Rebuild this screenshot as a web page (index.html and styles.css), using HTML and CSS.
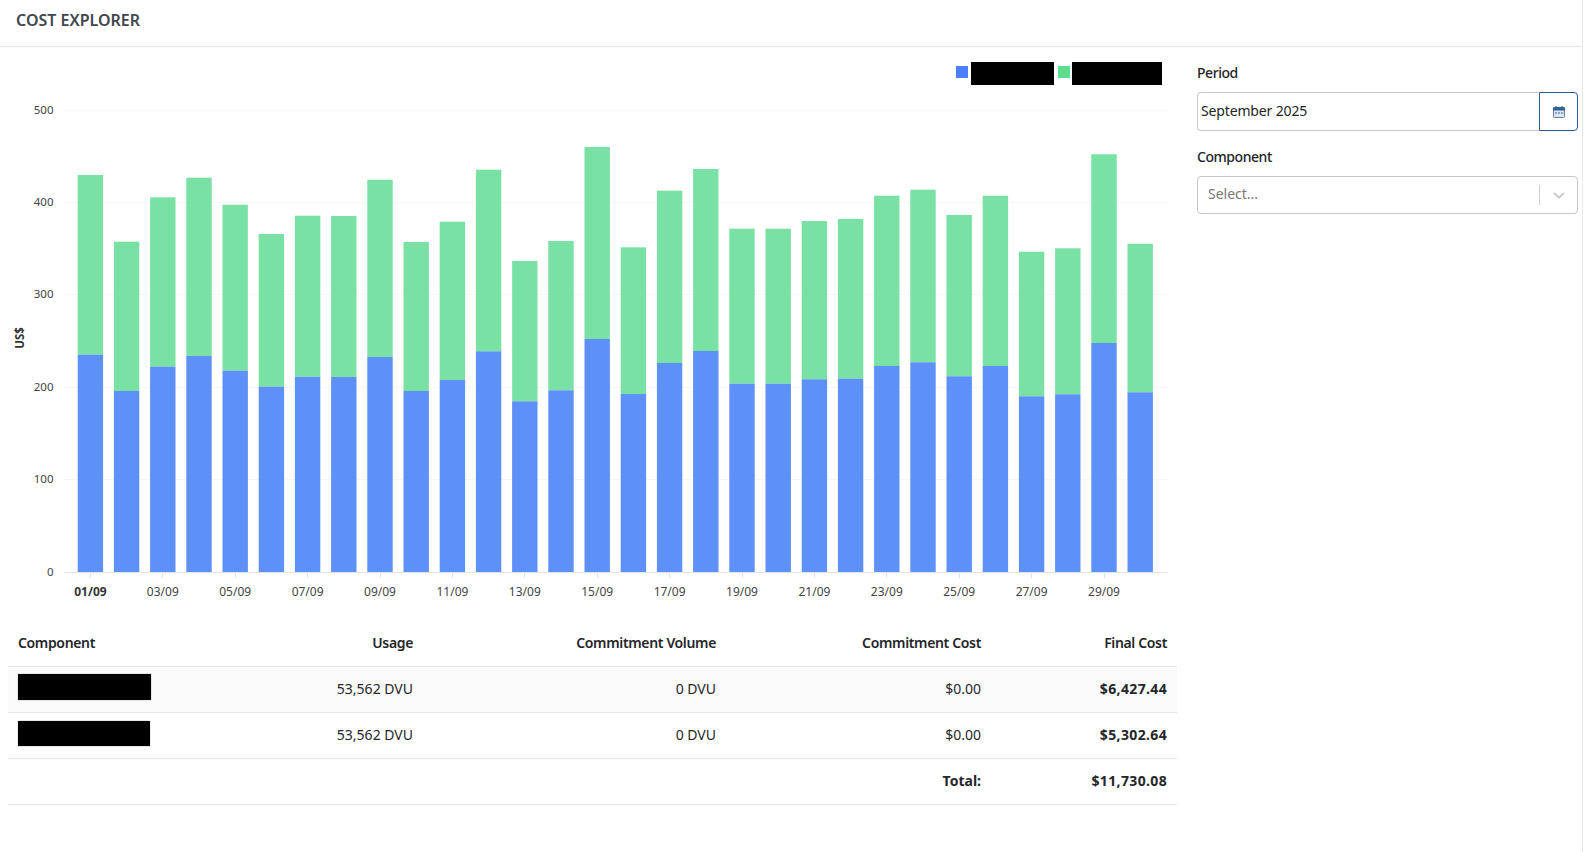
FILE: index.html
```html
<!DOCTYPE html>
<html lang="en">
<head>
<meta charset="utf-8">
<title>Cost Explorer</title>
<link rel="stylesheet" href="styles.css">
</head>
<body>
<div class="page">
  <header class="topbar"><h1 class="title">COST EXPLORER</h1></header>
  <div class="layout">
    <main class="main">
      <svg class="chart" width="1169" height="573" viewBox="8 47 1169 573" role="img" aria-label="Daily cost chart">
        <g class="grid">
          <line x1="64" x2="1167" y1="110.5" y2="110.5"/>
          <line x1="64" x2="1167" y1="202.5" y2="202.5"/>
          <line x1="64" x2="1167" y1="294.5" y2="294.5"/>
          <line x1="64" x2="1167" y1="387.5" y2="387.5"/>
          <line x1="64" x2="1167" y1="479.5" y2="479.5"/>
        </g>
        <g class="series-green">
          <rect x="77.7" y="175" width="25.4" height="179.7"/>
          <rect x="113.9" y="241.7" width="25.4" height="149.3"/>
          <rect x="150.1" y="197.3" width="25.4" height="169.4"/>
          <rect x="186.3" y="177.7" width="25.4" height="178.3"/>
          <rect x="222.5" y="204.7" width="25.4" height="166"/>
          <rect x="258.7" y="234" width="25.4" height="152.7"/>
          <rect x="294.9" y="215.7" width="25.4" height="161"/>
          <rect x="331.1" y="216" width="25.4" height="161"/>
          <rect x="367.3" y="179.7" width="25.4" height="177.3"/>
          <rect x="403.5" y="242" width="25.4" height="149"/>
          <rect x="439.7" y="221.7" width="25.4" height="158.3"/>
          <rect x="475.9" y="169.7" width="25.4" height="181.6"/>
          <rect x="512.1" y="261" width="25.4" height="140.3"/>
          <rect x="548.3" y="241" width="25.4" height="149.3"/>
          <rect x="584.5" y="147" width="25.4" height="192"/>
          <rect x="620.7" y="247.3" width="25.4" height="146.7"/>
          <rect x="656.9" y="190.7" width="25.4" height="172.3"/>
          <rect x="693.1" y="169" width="25.4" height="182"/>
          <rect x="729.3" y="228.7" width="25.4" height="155"/>
          <rect x="765.5" y="228.7" width="25.4" height="155"/>
          <rect x="801.7" y="221" width="25.4" height="158.3"/>
          <rect x="837.9" y="219" width="25.4" height="159.7"/>
          <rect x="874.1" y="195.7" width="25.4" height="170.3"/>
          <rect x="910.3" y="189.7" width="25.4" height="172.6"/>
          <rect x="946.5" y="215" width="25.4" height="161.3"/>
          <rect x="982.7" y="195.7" width="25.4" height="170.3"/>
          <rect x="1018.9" y="251.7" width="25.4" height="144.6"/>
          <rect x="1055.1" y="248.3" width="25.4" height="146"/>
          <rect x="1091.3" y="154.3" width="25.4" height="188.7"/>
          <rect x="1127.5" y="243.7" width="25.4" height="148.6"/>
        </g>
        <g class="series-blue">
          <rect x="77.7" y="354.7" width="25.4" height="217.3"/>
          <rect x="113.9" y="391" width="25.4" height="181"/>
          <rect x="150.1" y="366.7" width="25.4" height="205.3"/>
          <rect x="186.3" y="356" width="25.4" height="216"/>
          <rect x="222.5" y="370.7" width="25.4" height="201.3"/>
          <rect x="258.7" y="386.7" width="25.4" height="185.3"/>
          <rect x="294.9" y="376.7" width="25.4" height="195.3"/>
          <rect x="331.1" y="377" width="25.4" height="195"/>
          <rect x="367.3" y="357" width="25.4" height="215"/>
          <rect x="403.5" y="391" width="25.4" height="181"/>
          <rect x="439.7" y="380" width="25.4" height="192"/>
          <rect x="475.9" y="351.3" width="25.4" height="220.7"/>
          <rect x="512.1" y="401.3" width="25.4" height="170.7"/>
          <rect x="548.3" y="390.3" width="25.4" height="181.7"/>
          <rect x="584.5" y="339" width="25.4" height="233"/>
          <rect x="620.7" y="394" width="25.4" height="178"/>
          <rect x="656.9" y="363" width="25.4" height="209"/>
          <rect x="693.1" y="351" width="25.4" height="221"/>
          <rect x="729.3" y="383.7" width="25.4" height="188.3"/>
          <rect x="765.5" y="383.7" width="25.4" height="188.3"/>
          <rect x="801.7" y="379.3" width="25.4" height="192.7"/>
          <rect x="837.9" y="378.7" width="25.4" height="193.3"/>
          <rect x="874.1" y="366" width="25.4" height="206"/>
          <rect x="910.3" y="362.3" width="25.4" height="209.7"/>
          <rect x="946.5" y="376.3" width="25.4" height="195.7"/>
          <rect x="982.7" y="366" width="25.4" height="206"/>
          <rect x="1018.9" y="396.3" width="25.4" height="175.7"/>
          <rect x="1055.1" y="394.3" width="25.4" height="177.7"/>
          <rect x="1091.3" y="343" width="25.4" height="229"/>
          <rect x="1127.5" y="392.3" width="25.4" height="179.7"/>
        </g>
        <g class="axis">
          <line x1="64" x2="1167" y1="572.5" y2="572.5"/>
          <line x1="90.5" x2="90.5" y1="572" y2="578"/>
          <line x1="162.5" x2="162.5" y1="572" y2="578"/>
          <line x1="235.5" x2="235.5" y1="572" y2="578"/>
          <line x1="307.5" x2="307.5" y1="572" y2="578"/>
          <line x1="380.5" x2="380.5" y1="572" y2="578"/>
          <line x1="452.5" x2="452.5" y1="572" y2="578"/>
          <line x1="524.5" x2="524.5" y1="572" y2="578"/>
          <line x1="597.5" x2="597.5" y1="572" y2="578"/>
          <line x1="669.5" x2="669.5" y1="572" y2="578"/>
          <line x1="742.5" x2="742.5" y1="572" y2="578"/>
          <line x1="814.5" x2="814.5" y1="572" y2="578"/>
          <line x1="886.5" x2="886.5" y1="572" y2="578"/>
          <line x1="959.5" x2="959.5" y1="572" y2="578"/>
          <line x1="1031.5" x2="1031.5" y1="572" y2="578"/>
          <line x1="1104.5" x2="1104.5" y1="572" y2="578"/>
        </g>
        <g class="ylabels">
          <text x="53.5" y="114">500</text>
          <text x="53.5" y="206">400</text>
          <text x="53.5" y="298">300</text>
          <text x="53.5" y="391">200</text>
          <text x="53.5" y="483">100</text>
          <text x="53.5" y="576">0</text>
        </g>
        <g class="xlabels">
          <text class="xlabel-first" x="90.4" y="596">01/09</text>
          <text x="162.8" y="596">03/09</text>
          <text x="235.2" y="596">05/09</text>
          <text x="307.6" y="596">07/09</text>
          <text x="380" y="596">09/09</text>
          <text x="452.4" y="596">11/09</text>
          <text x="524.8" y="596">13/09</text>
          <text x="597.2" y="596">15/09</text>
          <text x="669.6" y="596">17/09</text>
          <text x="742" y="596">19/09</text>
          <text x="814.4" y="596">21/09</text>
          <text x="886.8" y="596">23/09</text>
          <text x="959.2" y="596">25/09</text>
          <text x="1031.6" y="596">27/09</text>
          <text x="1104" y="596">29/09</text>
        </g>
        <text class="ytitle" transform="translate(23.5 338) rotate(-90)">US$</text>
        <rect class="legend-blue" x="956" y="66" width="12" height="12"/>
        <rect class="redact" x="971" y="62" width="83" height="23"/>
        <rect class="legend-green" x="1058" y="66" width="12" height="12"/>
        <rect class="redact" x="1072" y="62" width="90" height="23"/>
      </svg>
      <table class="costs">
        <thead>
          <tr>
            <th class="col-name">Component</th>
            <th class="col-usage num">Usage</th>
            <th class="col-volume num">Commitment Volume</th>
            <th class="col-cost num">Commitment Cost</th>
            <th class="col-final num">Final Cost</th>
          </tr>
        </thead>
        <tbody>
          <tr class="striped">
            <td><span class="redact-cell redact-a"></span></td>
            <td class="num">53,562 DVU</td>
            <td class="num">0 DVU</td>
            <td class="num">$0.00</td>
            <td class="num strong money">$6,427.44</td>
          </tr>
          <tr>
            <td><span class="redact-cell redact-b"></span></td>
            <td class="num">53,562 DVU</td>
            <td class="num">0 DVU</td>
            <td class="num">$0.00</td>
            <td class="num strong money">$5,302.64</td>
          </tr>
          <tr>
            <td></td>
            <td></td>
            <td></td>
            <td class="num strong">Total:</td>
            <td class="num strong money">$11,730.08</td>
          </tr>
        </tbody>
      </table>
    </main>
    <aside class="sidebar">
      <div class="field">
        <label class="label">Period</label>
        <div class="input-group">
          <div class="input">September 2025</div>
          <button class="cal-btn" type="button" aria-label="Open calendar">
            <svg width="12" height="12" viewBox="0 0 12 12">
              <rect class="cal-body" x="0.5" y="1.5" width="11" height="10" rx="1"/>
              <path class="cal-top" d="M0 2.2A1 1 0 0 1 1 1.2H2.4V0H3.6V1.2H8.4V0H9.6V1.2H11A1 1 0 0 1 12 2.2V4.4H0Z"/>
              <path class="cal-ticks" d="M3 6v2M6 6v2M9 6v2"/>
            </svg>
          </button>
        </div>
      </div>
      <div class="field">
        <label class="label">Component</label>
        <div class="select">
          <span class="placeholder">Select...</span>
          <span class="select-divider"></span>
          <svg class="chevron" width="12" height="7" viewBox="0 0 12 7">
            <path d="M1 1l5 4.6L11 1"/>
          </svg>
        </div>
      </div>
    </aside>
  </div>
</div>
</body>
</html>
```
FILE: styles.css
```css
* { box-sizing: border-box; }
html, body { margin: 0; padding: 0; background: #fff; }
body {
  font-family: "Noto Sans", "Open Sans", Arial, sans-serif;
  font-size: 14px;
  color: #222428;
}
.page {
  width: 1583px;
  height: 852px;
  border-right: 1px solid #e8e8e8;
  overflow: hidden;
}
.topbar {
  height: 47px;
  padding: 0 16px 6px;
  display: flex;
  align-items: center;
  border-bottom: 1px solid #e4e4e4;
}
.title {
  margin: 0;
  font-size: 16px;
  font-weight: 600;
  color: #42464d;
}
.layout { display: flex; padding-left: 8px; }
.main { width: 1169px; flex: none; }
.chart { display: block; }
.grid line { stroke: #f6f6f6; stroke-width: 1; }
.series-green rect { fill: #79e1a4; }
.series-blue rect { fill: #5e91f7; }
.axis line { stroke: #e4e4e4; stroke-width: 1; }
.ylabels text { font-size: 11.5px; fill: #444; text-anchor: end; }
.xlabels text { font-size: 12px; fill: #444; text-anchor: middle; }
.xlabels .xlabel-first { font-weight: 700; fill: #333; }
.ytitle { font-size: 11.5px; font-weight: 700; fill: #333; text-anchor: middle; }
.legend-blue { fill: #4a80f7; }
.legend-green { fill: #5edc90; }
.redact { fill: #000; }
.costs {
  width: 1169px;
  border-collapse: collapse;
  table-layout: fixed;
}
.costs th, .costs td {
  height: 46px;
  padding: 0 10px 2px;
  border-bottom: 1px solid #e6e6e6;
  text-align: left;
  font-size: 14px;
  font-weight: 400;
  color: #24262a;
}
.costs th { font-weight: 600; letter-spacing: -0.35px; padding-bottom: 0; }
.costs .num { text-align: right; }
.costs .strong { font-weight: 700; }
.costs .money { letter-spacing: 0.35px; }
.col-name { width: 215px; }
.col-usage { width: 200px; }
.col-volume { width: 303px; }
.col-cost { width: 265px; }
.col-final { width: 186px; }
.striped td { background: #fafafa; }
.redact-cell { display: block; background: #000; box-shadow: 0 0 1px #777; }
.redact-a { width: 133px; height: 26px; margin-bottom: 3px; }
.redact-b { width: 132px; height: 25px; margin-bottom: 1px; }
.sidebar { width: 381px; margin-left: 20px; flex: none; padding-top: 16px; }
.field { margin-bottom: 16px; }
.label {
  display: block;
  height: 29px;
  line-height: 20px;
  font-size: 14px;
  font-weight: 500;
  letter-spacing: -0.45px;
  color: #222428;
}
.input-group { display: flex; height: 39px; }
.input {
  flex: 1;
  border: 1px solid #c4c9d2;
  border-right: 0;
  border-radius: 4px 0 0 4px;
  padding-left: 3px;
  line-height: 36px;
  letter-spacing: -0.15px;
  color: #222428;
}
.cal-btn {
  width: 39px;
  padding: 0;
  background: #fff;
  border: 1px solid #2c5a94;
  border-radius: 0 4px 4px 0;
  display: flex;
  align-items: center;
  justify-content: center;
}
.cal-body { fill: #dfe6f0; stroke: #5b80ad; stroke-width: 1; }
.cal-top { fill: #315f97; }
.cal-ticks { stroke: #315f97; stroke-width: 1; fill: none; }
.select {
  height: 38px;
  border: 1px solid #c6c6c6;
  border-radius: 4px;
  display: flex;
  align-items: center;
  padding: 0 0 0 10px;
}
.placeholder { flex: 1; color: #777; line-height: 20px; padding-bottom: 2px; }
.select-divider { width: 1px; height: 20px; background: #ccc; }
.chevron { margin: 0 12px 0 13px; }
.chevron path { fill: none; stroke: #ccc; stroke-width: 2; }
```
